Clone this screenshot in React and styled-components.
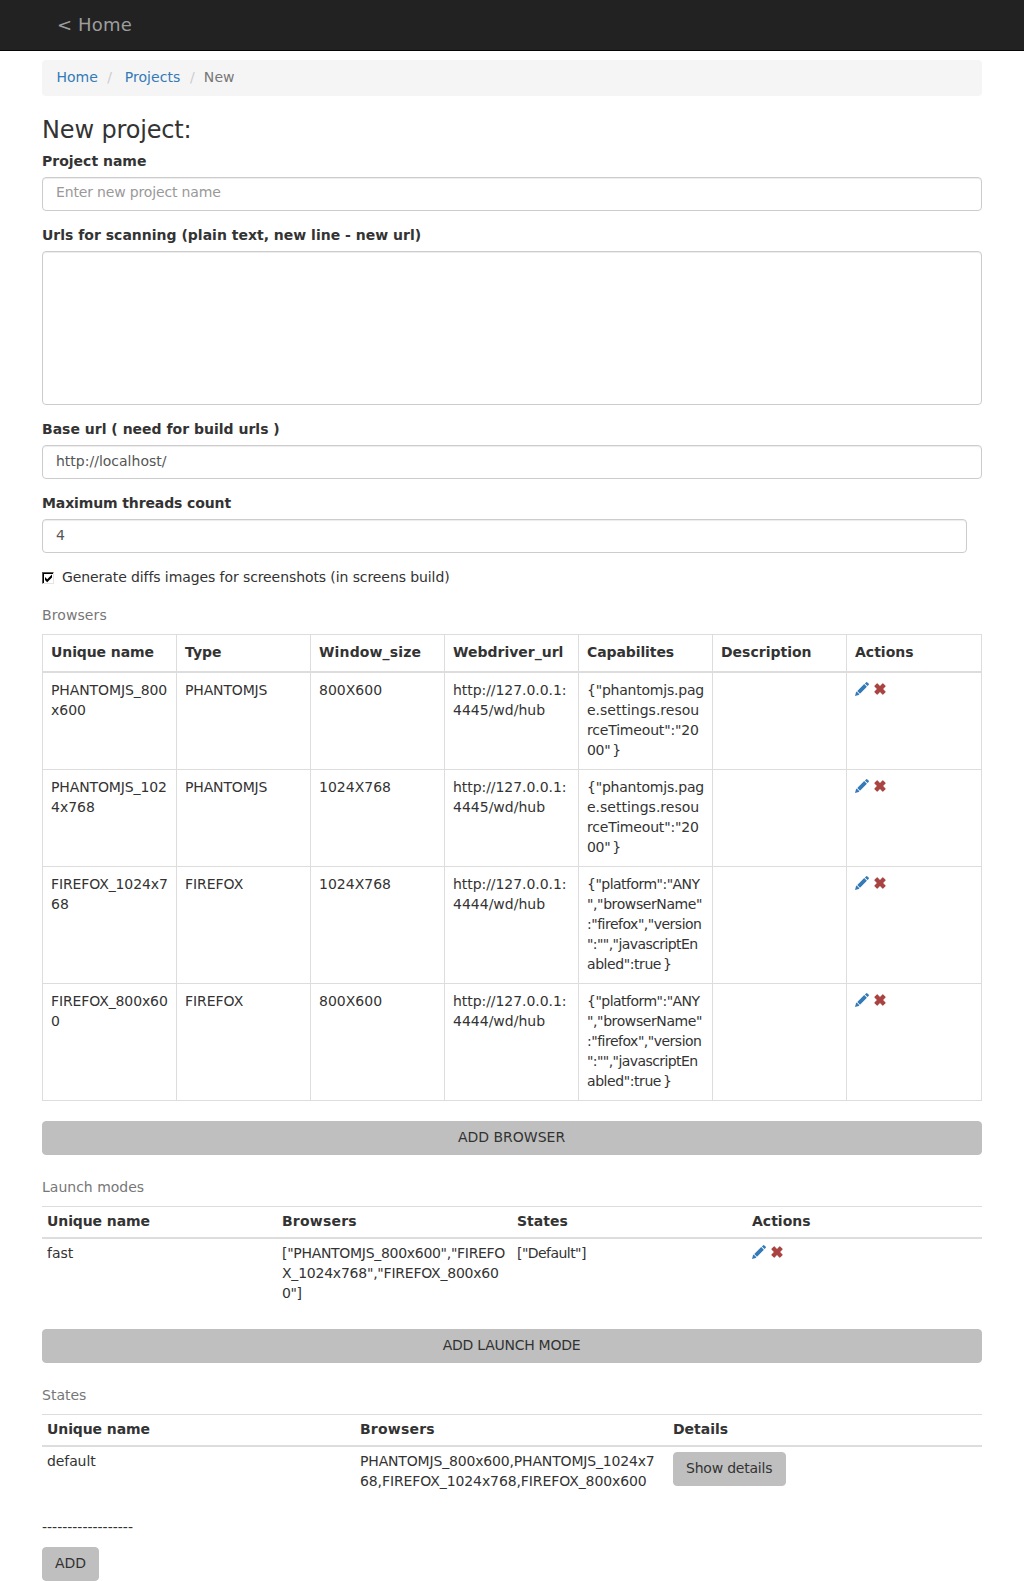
import React from "react";
import styled, { createGlobalStyle } from "styled-components";

const Global = createGlobalStyle`
  *, *::before, *::after { box-sizing: border-box; }
  body { margin: 0; padding: 0; background: #fff; color: #333; font: 14px/20px "DejaVu Sans", sans-serif; }
`;
const Nav = styled.nav`
  height: 51px; background: #222; border-bottom: 1px solid #080808; padding: 15px 57px; margin-bottom: 9px;
`;
const Brand = styled.a`display: block; font-size: 18px; line-height: 20px; color: #9d9d9d; letter-spacing: 0.15px;`;
const Container = styled.main`width: 940px; margin: 0 auto;`;
const Crumbs = styled.ol`
  list-style: none; margin: 0 0 20px; padding: 7px 14.5px 9px; height: 36px; background: #f5f5f5; border-radius: 4px; display: flex;
`;
const Crumb = styled.li`
  color: ${(p) => (p.$link ? "#337ab7" : "#777")};
  letter-spacing: ${(p) => p.$ls || 0}px;
  &:not(:first-child)::before { content: "/"; color: #ccc; padding: 0 ${(p) => p.$gap || "8px"} 0 9.500px; }
`;
const Title = styled.h1`font-size: 24px; line-height: 26.4px; font-weight: 400; margin: 0 0 9px; padding-top: 1px; height: 27.4px; letter-spacing: -0.15px;`;
const Group = styled.div`margin-bottom: 15px;`;
const Label = styled.label`
  display: block; font-weight: 700; height: 25px; line-height: 18px; letter-spacing: ${(p) => p.$ls || 0}px;
`;
const Input = styled.input`
  display: block; width: ${(p) => p.$w || "100%"}; height: 34px; padding: ${(p) => (p.placeholder ? "4px 12px 8px 13px" : "5px 12px 7px 13px")};
  font: inherit; color: #555; letter-spacing: ${(p) => p.$ls || 0}px;
  border: 1px solid #ccc; border-radius: 4px; box-shadow: inset 0 1px 1px rgba(0,0,0,.075); background: #fff;
  &::placeholder { color: #999; opacity: 1; }
`;
const Area = styled.textarea`
  display: block; width: 100%; height: 154px; padding: 6px 12px; resize: none; font: inherit;
  border: 1px solid #ccc; border-radius: 4px; box-shadow: inset 0 1px 1px rgba(0,0,0,.075);
`;
const Check = styled.label`display: flex; height: 20px; line-height: 19px; gap: 8px; margin: 0 0 10px; letter-spacing: -0.09px;`;
const Box = styled.span`
  width: 12px; height: 12px; margin-top: 4px; flex: none; background: #fff; border: 1px solid; border-color: #555 #e4e4e4 #e4e4e4 #555;
  box-shadow: inset 1px 1px 0 #000; display: flex;
`;
const Table = styled.table`
  width: 100%; table-layout: fixed; border-collapse: collapse; text-align: left; margin-bottom: 20px;
  caption { text-align: left; color: #777; padding: 7px 0 9px; letter-spacing: ${(p) => p.$cap || 0}px; }
  th, td { vertical-align: top; padding: ${(p) => (p.$bordered ? "7px 8px 9px" : "4px 5px 6px")}; white-space: nowrap; border-top: 1px solid #ddd; }
  ${(p) => p.$bordered && "th, td { border: 1px solid #ddd; }"}
  thead th { border-bottom: 2px solid #ddd; }
`;
const Th = styled.th`letter-spacing: ${(p) => p.$ls || 0}px;`;
const Line = styled.div`letter-spacing: ${(p) => p.$ls}px;`;
const Brace = styled.span`margin-left: 2px;`;
const Button = styled.button`
  display: block; width: ${(p) => p.$w || "100%"}; height: 34px; padding: 5px 13px 7px 12px; font: inherit; color: #333;
  letter-spacing: ${(p) => p.$ls || 0}px; background: #bfbfbf; border: 1px solid #bfbfbf; border-radius: 4px;
  margin: ${(p) => (p.$cell ? "1px 0 -1px" : "0")};
`;
const Section = styled.section`margin-bottom: 15px;`;
const Icons = styled.div`display: flex; gap: 4px; height: 20px; padding-top: 2px;`;
const Dashes = styled.div`height: 20px; margin-bottom: 10px;`;

const Actions = () => (
  <Icons>
    <svg width="14" height="14" viewBox="0 0 14 14" fill="#337ab7">
      <path d="M0 14l1-3.700.7-.7 2.700 2.700-.7.7zM2.300 9l6.900-6.900 2.700 2.700L5 11.700zM9.900 1.500L11 .4q.7-.7 1.400 0l1.200 1.200q.7.7 0 1.400l-1.100 1.100z" />
    </svg>
    <svg width="14" height="14" viewBox="0 0 14 14" fill="#a94442">
      <path d="M3.800 1.500q.4-.3.800 0L7 3.900l2.400-2.400q.4-.3.800 0l2.300 2.300q.4.4 0 .8L10.100 7l2.400 2.400q.4.4 0 .8l-2.300 2.300q-.4.3-.8 0L7 10.100l-2.400 2.400q-.4.3-.8 0L1.500 10.200q-.4-.4 0-.8L3.900 7 1.500 4.600q-.4-.4 0-.8z" />
    </svg>
  </Icons>
);

// A cell is a list of [text, tracking] lines; a closing brace stands slightly apart.
const Cell = ({ lines }) => (
  <td>
    {lines.map(([t, ls]) => (
      <Line key={t} $ls={ls}>{t.endsWith("}") ? <>{t.slice(0, -1)}<Brace>{"}"}</Brace></> : t}</Line>
    ))}
  </td>
);

const url = (port) => [["http://127.0.0.1:", -0.06], [`${port}/wd/hub`, 0]];
const ph = [['{"phantomjs.pag', -0.22], ["e.settings.resou", 0], ['rceTimeout":"20', -0.18], ['00"}', -0.3]];
const ff = [['{"platform":"ANY', -0.53], ['","browserName"', -0.4], [':"firefox","version', -0.5], ['":"","javascriptEn', -0.58], ['abled":true}', -0.43]];
const PJ = [["PHANTOMJS", -0.15]];
const FF = [["FIREFOX", -0.05]];
const browsers = [
  [[["PHANTOMJS_800", -0.1], ["x600", 0]], PJ, [["800X600", 0]], url(4445), ph, []],
  [[["PHANTOMJS_102", -0.12], ["4x768", 0]], PJ, [["1024X768", 0]], url(4445), ph, []],
  [[["FIREFOX_1024x7", -0.12], ["68", 0]], FF, [["1024X768", 0]], url(4444), ff, []],
  [[["FIREFOX_800x60", -0.12], ["0", 0]], FF, [["800X600", 0]], url(4444), ff, []],
];
const headTracking = { "Unique name": -0.1, Window_size: 0.14, Browsers: 0.2, Capabilites: -0.1 };
const Head = ({ cols, w }) => (
  <>
    <colgroup>{cols.map((c, i) => <col key={c} width={i < cols.length - 1 ? w : undefined} />)}</colgroup>
    <thead><tr>{cols.map((c) => <Th key={c} $ls={headTracking[c]}>{c}</Th>)}</tr></thead>
  </>
);

export default function App() {
  return (
    <>
      <Global />
      <Nav><Brand>&lt; Home</Brand></Nav>
      <Container>
        <Crumbs><Crumb $link>Home</Crumb><Crumb $link $gap="12.5px" $ls={0.08}>Projects</Crumb><Crumb $gap="9px" $ls={0.1}>New</Crumb></Crumbs>
        <Title>New project:</Title>
        <Group><Label>Project name</Label><Input $ls={-0.16} placeholder="Enter new project name" /></Group>
        <Group><Label>Urls for scanning (plain text, new line - new url)</Label><Area /></Group>
        <Group><Label>Base url ( need for build urls )</Label><Input defaultValue="http://localhost/" /></Group>
        <Group><Label $ls={-0.12}>Maximum threads count</Label><Input $w="925px" defaultValue="4" /></Group>
        <Check>
          <Box><svg width="10" height="10" viewBox="0 0 10 10"><path d="M2 4l2.200 2.300L9 1.600v3L4.200 9.200 2 7z" fill="#000" /></svg></Box>
          Generate diffs images for screenshots (in screens build)
        </Check>
        <Table $bordered $cap={0.1}>
          <caption>Browsers</caption>
          <Head w={134} cols={["Unique name", "Type", "Window_size", "Webdriver_url", "Capabilites", "Description", "Actions"]} />
          <tbody>{browsers.map((b, r) => <tr key={r}>{b.map((c, i) => <Cell key={i} lines={c} />)}<td><Actions /></td></tr>)}</tbody>
        </Table>
        <Section><Button>ADD BROWSER</Button></Section>
        <Table>
          <caption>Launch modes</caption>
          <Head w={235} cols={["Unique name", "Browsers", "States", "Actions"]} />
          <tbody><tr>
            <Cell lines={[["fast", 0]]} />
            <Cell lines={[['["PHANTOMJS_800x600","FIREFO', -0.3], ['X_1024x768","FIREFOX_800x60', -0.23], ['0"]', -0.4]]} />
            <Cell lines={[['["Default"]', -0.55]]} />
            <td><Actions /></td>
          </tr></tbody>
        </Table>
        <Section><Button $ls={-0.27}>ADD LAUNCH MODE</Button></Section>
        <Table>
          <caption>States</caption>
          <Head w={313} cols={["Unique name", "Browsers", "Details"]} />
          <tbody><tr>
            <Cell lines={[["default", -0.1]]} />
            <Cell lines={[["PHANTOMJS_800x600,PHANTOMJS_1024x7", -0.17], ["68,FIREFOX_1024x768,FIREFOX_800x600", -0.1]]} />
            <td><Button $cell $w="113px" $ls={-0.22}>Show details</Button></td>
          </tr></tbody>
        </Table>
        <Dashes>------------------</Dashes>
        <Button $w="57px">ADD</Button>
      </Container>
    </>
  );
}
